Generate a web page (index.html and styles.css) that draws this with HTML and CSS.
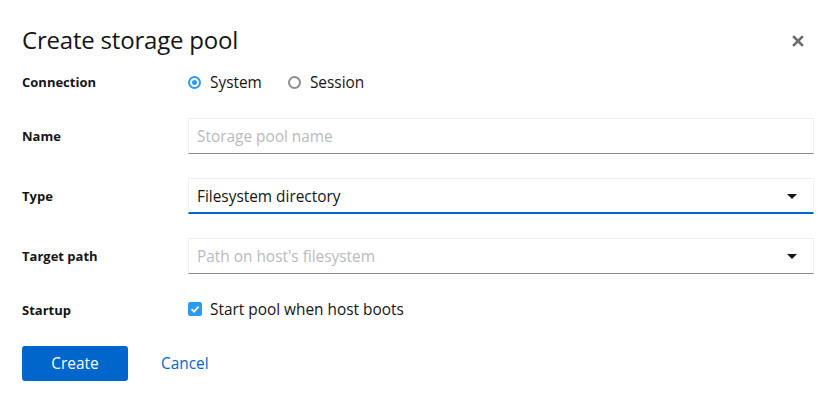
FILE: index.html
```html
<!DOCTYPE html>
<html>
<head>
<meta charset="utf-8">
<link rel="stylesheet" href="styles.css">
</head>
<body>
<div class="modal">
  <div class="header">
    <h1 class="title">Create storage pool</h1>
    <button class="close" aria-label="Close">
      <svg width="12" height="12" viewBox="0 0 12 12"><path d="M2 2 L10 10 M10 2 L2 10" stroke="#6a6e73" stroke-width="2.6" stroke-linecap="square"/></svg>
    </button>
  </div>
  <div class="form">
    <div class="label">Connection</div>
    <div class="radios">
      <label class="radio"><span class="dot on"></span>System</label>
      <label class="radio"><span class="dot"></span>Session</label>
    </div>

    <div class="label">Name</div>
    <div class="input placeholder">Storage pool name</div>

    <div class="label">Type</div>
    <div class="input select focused"><span>Filesystem directory</span><span class="caret"></span></div>

    <div class="label">Target path</div>
    <div class="input select placeholder"><span>Path on host's filesystem</span><span class="caret"></span></div>

    <div class="label">Startup</div>
    <label class="check"><span class="box"><svg width="10" height="10" viewBox="0 0 10 10"><path d="M1.5 5.2 L4 7.6 L8.6 2.6" fill="none" stroke="#fff" stroke-width="1.8"/></svg></span>Start pool when host boots</label>
  </div>
  <div class="footer">
    <button class="primary">Create</button>
    <button class="link">Cancel</button>
  </div>
</div>
</body>
</html>
```

FILE: styles.css
```css
html, body {
  margin: 0;
  padding: 0;
  background: #fff;
}
body {
  font-family: "Open Sans", "Liberation Sans", sans-serif;
  color: #151515;
  font-size: 15.4px;
}
.modal {
  width: 832px;
  height: 400px;
  box-sizing: border-box;
  padding: 24px 18px 0 22px;
}
.header {
  display: flex;
  align-items: center;
  justify-content: space-between;
  height: 32px;
}
.title {
  margin: 0;
  font-size: 24px;
  font-weight: 400;
  line-height: 32px;
  letter-spacing: -0.2px;
}
.close {
  border: 0;
  background: none;
  padding: 0;
  width: 12px;
  height: 12px;
  margin-right: 10px;
  margin-top: 2px;
  display: flex;
}
.form {
  display: grid;
  grid-template-columns: 166px 1fr;
  grid-auto-rows: auto;
  row-gap: 24px;
  align-items: center;
  margin-top: 14px;
}
.label {
  font-size: 13px;
  font-weight: 700;
  color: #151515;
}
.radios {
  display: flex;
  gap: 26px;
  height: 24px;
  align-items: center;
}
.radio {
  display: flex;
  align-items: center;
  gap: 9px;
}
.dot {
  width: 13px;
  height: 13px;
  box-sizing: border-box;
  border-radius: 50%;
  border: 2px solid #8a8d90;
  display: flex;
  align-items: center;
  justify-content: center;
}
.dot.on {
  border-color: #2b9af3;
}
.dot.on::after {
  content: "";
  width: 5px;
  height: 5px;
  border-radius: 50%;
  background: #2b9af3;
}
.input {
  height: 36px;
  box-sizing: border-box;
  border: 1px solid #f0f0f0;
  border-bottom-color: #8a8d90;
  padding: 0 8px;
  display: flex;
  align-items: center;
  justify-content: space-between;
}
.placeholder {
  color: #b8bbbe;
}
.focused {
  border-bottom: 2px solid #0066cc;
  padding-top: 1px;
}
.caret {
  width: 0;
  height: 0;
  border-left: 5px solid transparent;
  border-right: 5px solid transparent;
  border-top: 5px solid #151515;
  margin-right: 8px;
}
.check {
  display: flex;
  align-items: center;
  gap: 8px;
  height: 24px;
  margin-top: -1px;
}
.box {
  width: 14px;
  height: 14px;
  border-radius: 2px;
  background: #2b9af3;
  display: flex;
  align-items: center;
  justify-content: center;
}
.footer {
  display: flex;
  align-items: center;
  gap: 10px;
  margin-top: 25px;
}
button {
  font-family: inherit;
  font-size: 15.4px;
  cursor: pointer;
}
.primary {
  width: 106px;
  height: 35px;
  background: #0066cc;
  color: #fff;
  border: 0;
  border-radius: 3px;
}
.link {
  background: none;
  border: 0;
  color: #0066cc;
  padding: 0 23px;
}
```
